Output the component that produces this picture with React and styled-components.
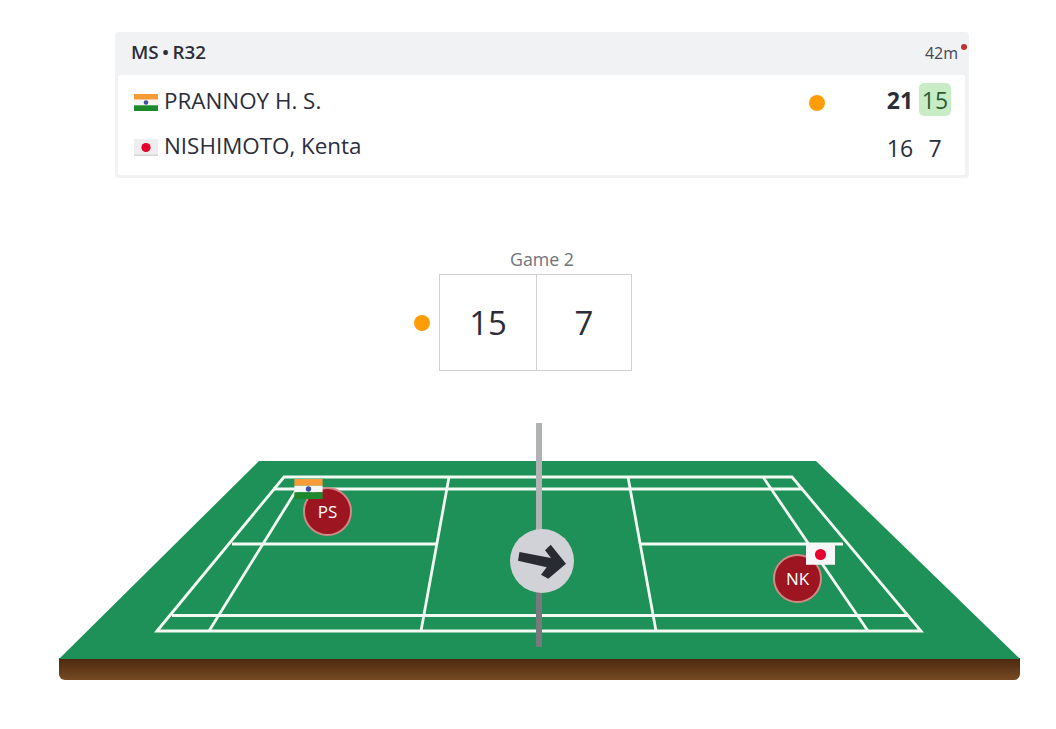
import React from 'react';
import styled, { createGlobalStyle } from 'styled-components';

const GlobalStyle = createGlobalStyle`
  html, body {
    margin: 0;
    padding: 0;
    background: #fff;
    font-family: "Open Sans", "Liberation Sans", sans-serif;
    color: #2b2d38;
  }
`;

const Page = styled.div`
  width: 1056px;
  height: 729px;
  overflow: hidden;
  display: flex;
  flex-direction: column;
  padding-top: 32px;
  box-sizing: border-box;
`;

const Card = styled.section`
  width: 854px;
  height: 146px;
  margin-left: 115px;
  box-sizing: border-box;
  background: #f1f2f4;
  border-radius: 4px;
  padding: 0 4px 3px 3px;
  display: flex;
  flex-direction: column;
`;

const CardHeader = styled.header`
  height: 43px;
  flex: none;
  display: flex;
  align-items: center;
  justify-content: space-between;
  padding: 0 7px 0 13px;
`;

const RoundTitle = styled.div`
  font-size: 18.8px;
  font-weight: 600;
  word-spacing: -1.5px;
  margin-top: -3px;
`;

const Duration = styled.div`
  position: relative;
  font-size: 16px;
  color: #444650;
  margin-top: -2px;
`;

const LiveDot = styled.span`
  position: absolute;
  top: 2px;
  right: -9px;
  width: 6px;
  height: 6px;
  border-radius: 50%;
  background: #c0302e;
`;

const CardBody = styled.div`
  flex: 1;
  background: #fff;
  border-radius: 2px;
  display: flex;
  flex-direction: column;
  padding-top: 5px;
`;

const PlayerRow = styled.div`
  height: 45px;
  display: flex;
  align-items: center;
  padding: 0 14px 0 16px;
`;

const PlayerName = styled.div`
  flex: 1;
  font-size: 22.4px;
  margin-left: 6px;
  margin-top: -5px;
`;

const FlagBox = styled.svg`
  display: block;
  flex: none;
`;

const ServeDot = styled.span`
  width: 16px;
  height: 16px;
  border-radius: 50%;
  background: #ff9d09;
  flex: none;
`;

const RowServe = styled(ServeDot)`
  margin-right: 59px;
`;

const Score = styled.div`
  width: 32px;
  height: 33px;
  margin-right: ${(p) => (p.$first ? 3 : 0)}px;
  margin-top: ${(p) => (p.$raised ? -6 : 0)}px;
  display: flex;
  align-items: center;
  justify-content: center;
  font-size: 23px;
  font-weight: ${(p) => (p.$bold ? 700 : 400)};
  color: ${(p) => (p.$won ? '#2c5c34' : 'inherit')};
  background: ${(p) => (p.$won ? '#c8ecc6' : 'transparent')};
  border-radius: 5px;
`;

const GameBlock = styled.div`
  margin-top: 70px;
  margin-left: 414px;
  display: flex;
  align-items: center;
  height: 123px;
`;

const GameServe = styled(ServeDot)`
  margin-right: 9px;
  margin-top: 27px;
`;

const GameColumn = styled.div`
  display: flex;
  flex-direction: column;
  width: 193px;
`;

const GameLabel = styled.div`
  font-size: 17.8px;
  line-height: 22px;
  padding-bottom: 4px;
  text-align: center;
  color: #6d747a;
  padding-left: 13px;
`;

const GameBox = styled.div`
  height: 97px;
  box-sizing: border-box;
  border: 1px solid #cfd0d6;
  display: grid;
  grid-template-columns: 96px 1fr;
`;

const GameCell = styled.div`
  display: flex;
  align-items: center;
  justify-content: center;
  font-size: 33px;
  margin-top: -1px;
  border-left: ${(p) => (p.$divided ? '1px solid #cfd0d6' : 'none')};
`;

const CourtWrap = styled.div`
  position: relative;
  width: 962px;
  height: 258px;
  margin-left: 59px;
  margin-top: 52px;
`;

const CourtDrawing = styled.svg`
  display: block;
`;

const PlayerToken = styled.div`
  position: absolute;
  left: ${(p) => p.$x}px;
  top: ${(p) => p.$y}px;
  width: 49px;
  height: 49px;
  box-sizing: border-box;
  border-radius: 50%;
  background: #9e1522;
  border: 2px solid #d08a86;
  color: #fff;
  font-size: 17px;
  display: flex;
  align-items: center;
  justify-content: center;
`;

const TokenFlag = styled.div`
  position: absolute;
  left: ${(p) => p.$x}px;
  top: ${(p) => p.$y}px;
`;

const ArrowBadge = styled.div`
  position: absolute;
  left: 451px;
  top: 106px;
  width: 64px;
  height: 64px;
  border-radius: 50%;
  background: #d1d2d7;
  display: flex;
  align-items: center;
  justify-content: center;
`;

const IndiaFlag = ({ w = 24, h = 17 }) => (
  <FlagBox width={w} height={h} viewBox="0 0 24 17">
    <rect width="24" height="5.7" fill="#f79b38" />
    <rect y="5.7" width="24" height="5.6" fill="#f6f6f6" />
    <rect y="11.3" width="24" height="5.7" fill="#1c8a2c" />
    <circle cx="12" cy="8.5" r="2.3" fill="#3f4fa0" />
  </FlagBox>
);

const JapanFlag = ({ w = 24, h = 17, shade }) => (
  <FlagBox width={w} height={h} viewBox="0 0 24 17">
    <rect width="24" height="17" fill={shade ? '#eeeeee' : '#f7f7f7'} />
    {shade && <rect y="15.5" width="24" height="1.5" fill="#d6d6d6" />}
    <circle cx="12" cy="8.5" r="4.6" fill="#e5002d" />
  </FlagBox>
);

const CourtLines = () => (
  <g stroke="#f2faf2" strokeWidth="2.8" fill="none">
    <polygon points="98,208 225,54 733,54 862,208" />
    <line x1="214" y1="66" x2="744" y2="66" />
    <line x1="113" y1="192.5" x2="848" y2="192.5" />
    <line x1="150" y1="208" x2="238" y2="66" />
    <line x1="809" y1="208" x2="704" y2="54" />
    <line x1="362" y1="208" x2="390" y2="54" />
    <line x1="597" y1="208" x2="569" y2="54" />
    <line x1="173" y1="121" x2="378" y2="121" />
    <line x1="581" y1="121" x2="784" y2="121" />
  </g>
);

const Court = () => (
  <CourtDrawing width="962" height="258" viewBox="0 0 962 258">
    <defs>
      <linearGradient id="wood" x1="0" y1="0" x2="0" y2="1">
        <stop offset="0" stopColor="#4d280e" />
        <stop offset="1" stopColor="#754a24" />
      </linearGradient>
    </defs>
    <path d="M0 235 H961 V251 a6 6 0 0 1 -6 6 H6 a6 6 0 0 1 -6 -6 Z" fill="url(#wood)" />
    <polygon points="200,38 757,38 961,236 0,236" fill="#1d9157" />
    <CourtLines />
    <rect x="477" y="0" width="6" height="120" fill="#b1b2b4" />
    <rect x="477" y="150" width="6" height="74" fill="#77797c" />
  </CourtDrawing>
);

const App = () => (
  <Page>
    <GlobalStyle />
    <Card>
      <CardHeader>
        <RoundTitle>MS • R32</RoundTitle>
        <Duration>
          42m
          <LiveDot />
        </Duration>
      </CardHeader>
      <CardBody>
        <PlayerRow>
          <IndiaFlag />
          <PlayerName>PRANNOY H. S.</PlayerName>
          <RowServe />
          <Score $first $raised $bold>21</Score>
          <Score $raised $won>15</Score>
        </PlayerRow>
        <PlayerRow>
          <JapanFlag shade />
          <PlayerName>NISHIMOTO, Kenta</PlayerName>
          <Score $first>16</Score>
          <Score>7</Score>
        </PlayerRow>
      </CardBody>
    </Card>

    <GameBlock>
      <GameServe />
      <GameColumn>
        <GameLabel>Game 2</GameLabel>
        <GameBox>
          <GameCell>15</GameCell>
          <GameCell $divided>7</GameCell>
        </GameBox>
      </GameColumn>
    </GameBlock>

    <CourtWrap>
      <Court />
      <PlayerToken $x={244} $y={64}>PS</PlayerToken>
      <TokenFlag $x={235} $y={56}>
        <IndiaFlag w={29} h={20} />
      </TokenFlag>
      <PlayerToken $x={714} $y={131}>NK</PlayerToken>
      <TokenFlag $x={747} $y={121}>
        <JapanFlag w={29} h={21} />
      </TokenFlag>
      <ArrowBadge>
        <svg width="64" height="64" viewBox="0 0 64 64">
          <path
            d="M9.5 23 L8 31.7 L36.7 38.3 L31 45.7 L38.3 49.7 L56 34.7 L40.7 15.7 L35 21.3 L41 29 Z"
            fill="#292b33"
          />
        </svg>
      </ArrowBadge>
    </CourtWrap>
  </Page>
);

export default App;
